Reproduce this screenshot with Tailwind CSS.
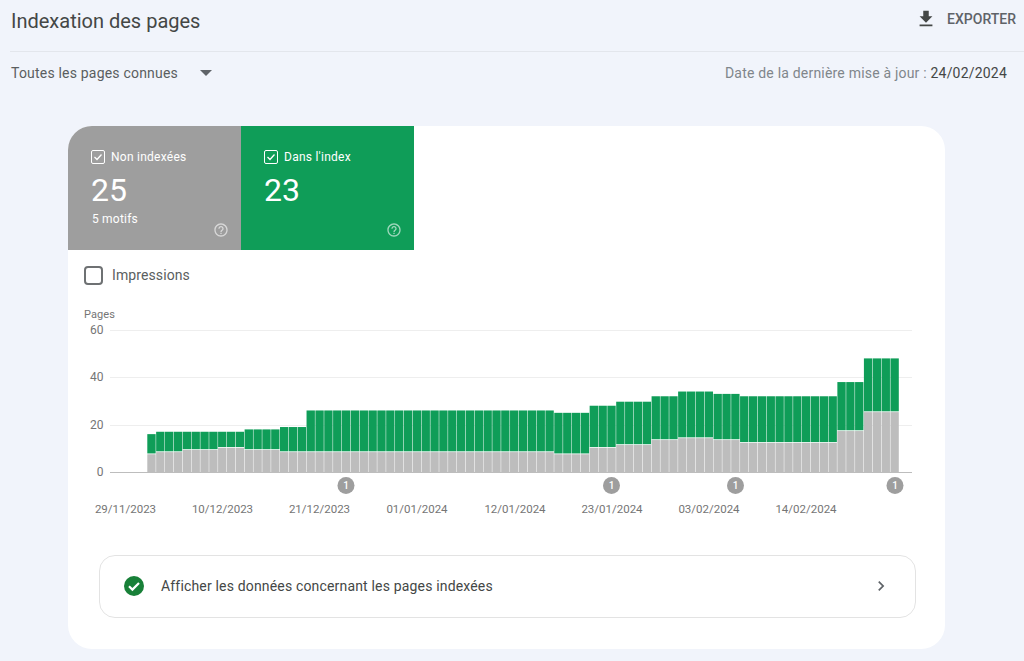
<!DOCTYPE html>
<html lang="fr">
<head>
    <meta charset="UTF-8">
    <title>Indexation des pages</title>
    <script src="https://cdn.jsdelivr.net/npm/@tailwindcss/browser@4"></script>
</head>
<body class="bg-[#f1f4fb] h-[661px] w-[1024px] overflow-hidden font-['Roboto',sans-serif] text-[#444746]">
    <!-- Header -->
    <div class="ml-[10px] h-[52px] border-b border-[#e3e6ec] flex justify-between pl-px pr-2">
        <h1 class="text-[20px] leading-[22px] pt-[10px] text-[#444746]">Indexation des pages</h1>
        <button class="flex items-start gap-[10px] pt-[8px] text-sm leading-[22px] font-medium text-[#5f6368]">
            <svg class="w-[22px] h-[22px] fill-[#444746]" viewBox="0 0 24 24"><path d="M19 9h-4V3H9v6H5l7 7 7-7zM5 18v2h14v-2H5z"/></svg>
            EXPORTER
        </button>
    </div>

    <!-- Filter row -->
    <div class="flex justify-between items-center h-[42px] pl-[11px] pr-[17px] text-sm tracking-[0.2px]">
        <div class="flex items-center gap-[22px] text-[#5a5e60]">
            <span>Toutes les pages connues</span>
            <span class="w-0 h-0 border-x-[6.5px] border-x-transparent border-t-[6.5px] border-t-[#5f6368]"></span>
        </div>
        <div class="text-[#80868b]">Date de la dernière mise à jour : <span class="text-[#444746]">24/02/2024</span></div>
    </div>

    <!-- Card -->
    <div class="ml-[68px] mt-[32px] w-[877px] h-[523px] bg-white rounded-[24px] overflow-hidden">
        <!-- Tiles -->
        <div class="flex h-[124px] text-white">
            <div class="relative w-[173px] bg-[#9e9e9e] pl-[23px] pt-[23px]">
                <div class="flex items-center gap-[6px] text-xs leading-[16px] tracking-[0.25px]">
                    <svg class="w-[14px] h-[14px]" viewBox="0 0 14 14" fill="none" stroke="white" stroke-width="1"><rect x="0.5" y="0.5" width="13" height="13" rx="1.5"/><path d="M3.5 7l2.5 2.5 4.5-5" stroke-width="1.3"/></svg>
                    Non indexées
                </div>
                <div class="text-[32px] leading-[36px] mt-[7px]">25</div>
                <div class="text-xs leading-[16px] mt-[3px] ml-px tracking-[0.2px]">5 motifs</div>
                <svg class="absolute right-[12px] bottom-[12px] w-[16px] h-[16px]" viewBox="0 0 24 24" fill="#ffffff" fill-opacity="0.6"><path d="M11 18h2v-2h-2v2zm1-16C6.48 2 2 6.48 2 12s4.48 10 10 10 10-4.48 10-10S17.52 2 12 2zm0 18c-4.41 0-8-3.59-8-8s3.59-8 8-8 8 3.59 8 8-3.59 8-8 8zm0-14c-2.21 0-4 1.79-4 4h2c0-1.1.9-2 2-2s2 .9 2 2c0 2-3 1.75-3 5h2c0-2.25 3-2.5 3-5 0-2.21-1.79-4-4-4z"/></svg>
            </div>
            <div class="relative w-[173px] bg-[#0f9d58] pl-[23px] pt-[23px]">
                <div class="flex items-center gap-[6px] text-xs leading-[16px] tracking-[0.25px]">
                    <svg class="w-[14px] h-[14px]" viewBox="0 0 14 14" fill="none" stroke="white" stroke-width="1"><rect x="0.5" y="0.5" width="13" height="13" rx="1.5"/><path d="M3.5 7l2.5 2.5 4.5-5" stroke-width="1.3"/></svg>
                    Dans l'index
                </div>
                <div class="text-[32px] leading-[36px] mt-[7px]">23</div>
                <svg class="absolute right-[12px] bottom-[12px] w-[16px] h-[16px]" viewBox="0 0 24 24" fill="#ffffff" fill-opacity="0.6"><path d="M11 18h2v-2h-2v2zm1-16C6.48 2 2 6.48 2 12s4.48 10 10 10 10-4.48 10-10S17.52 2 12 2zm0 18c-4.41 0-8-3.59-8-8s3.59-8 8-8 8 3.59 8 8-3.59 8-8 8zm0-14c-2.21 0-4 1.79-4 4h2c0-1.1.9-2 2-2s2 .9 2 2c0 2-3 1.75-3 5h2c0-2.25 3-2.5 3-5 0-2.21-1.79-4-4-4z"/></svg>
            </div>
        </div>

        <!-- Impressions toggle -->
        <div class="flex items-center gap-[9px] h-[50px] pl-[16px] text-sm tracking-[0.1px] text-[#5a5e60]">
            <span class="w-[19px] h-[19px] rounded-[4px] border-2 border-[#6e7173]"></span>
            Impressions
        </div>

        <!-- Chart, viewBox uses page coordinates -->
        <svg id="chart" class="block w-[877px] h-[225px]" viewBox="68 300 877 225" font-size="12">
            <text x="84" y="318" font-size="11" letter-spacing="0.1" fill="#757575">Pages</text>
            <g stroke="#eeeeee"><path d="M110 330.5H912M110 377.5H912M110 425.5H912"/></g>
            <g fill="#757575" text-anchor="end">
                <text x="103.500" y="334">60</text>
                <text x="103.500" y="381">40</text>
                <text x="103.500" y="429">20</text>
                <text x="103.500" y="476">0</text>
            </g>
            <g id="bars"></g>
            <path d="M110 472.5H912" stroke="#bdbdbd"/>
            <g fill="#9e9e9e">
                <circle cx="346" cy="485.5" r="8.5"/><circle cx="611.5" cy="485.5" r="8.5"/><circle cx="735.5" cy="485.5" r="8.5"/><circle cx="895" cy="485.5" r="8.5"/>
            </g>
            <g fill="#ffffff" font-size="10" text-anchor="middle" font-weight="500">
                <text x="346" y="489">1</text><text x="611.5" y="489">1</text><text x="735.5" y="489">1</text><text x="895" y="489">1</text>
            </g>
            <g fill="#757575" text-anchor="middle" font-size="11.5">
                <text x="125.500" y="513">29/11/2023</text>
                <text x="222.500" y="513">10/12/2023</text>
                <text x="319.500" y="513">21/12/2023</text>
                <text x="417" y="513">01/01/2024</text>
                <text x="515" y="513">12/01/2024</text>
                <text x="612" y="513">23/01/2024</text>
                <text x="709" y="513">03/02/2024</text>
                <text x="806" y="513">14/02/2024</text>
            </g>
        </svg>

        <!-- Link row -->
        <div class="ml-[31px] mt-[30px] w-[817px] h-[63px] rounded-[16px] border border-[#e3e3e3] flex items-center pb-px pl-[24px] pr-[24px] text-sm tracking-[0.17px] text-[#444746]">
            <svg class="w-[22px] h-[22px] -ml-[1px] mr-[16px]" viewBox="0 0 22 22"><circle cx="11" cy="11" r="10" fill="#188038"/><path d="M6 11.3l3.4 3.3L16 8" fill="none" stroke="white" stroke-width="2.2"/></svg>
            <span>Afficher les données concernant les pages indexées</span>
            <svg class="ml-auto w-[20px] h-[20px] fill-[#5f6368]" viewBox="0 0 24 24"><path d="M10 6L8.59 7.41 13.17 12l-4.58 4.59L10 18l6-6z"/></svg>
        </div>
    </div>

    <script>
        // runs of [count, total, not indexed]
        const runs = [[1,16,7.5],[3,17,8.4],[4,17,9.3],[3,17,10.2],[4,18,9.3],[3,19,8.4],[28,26,8.4],[4,25,7.5],
            [3,28,10.2],[4,29.7,11.4],[3,32,13.5],[4,34,14.3],[3,33,13.5],[11,32,12.3],[3,38,17.3],[4,48,25.3]];
        const ns = 'http://www.w3.org/2000/svg';
        const bars = document.getElementById('bars');
        const step = 752 / 85;
        const scale = 142 / 60;
        function rect(x, y, w, h, fill) {
            const r = document.createElementNS(ns, 'rect');
            r.setAttribute('x', x); r.setAttribute('y', y);
            r.setAttribute('width', w); r.setAttribute('height', h);
            r.setAttribute('fill', fill);
            bars.appendChild(r);
        }
        let i = 0;
        runs.forEach(([count, total, gray]) => {
            for (let c = 0; c < count; c++, i++) {
                const x = 147.3 + i * step;
                rect(x, 472 - gray * scale, step - 0.5, gray * scale, '#bdbdbd');
                rect(x, 472 - total * scale, step - 0.5, (total - gray) * scale - 0.8, '#0f9d58');
            }
        });
    </script>
</body>
</html>
